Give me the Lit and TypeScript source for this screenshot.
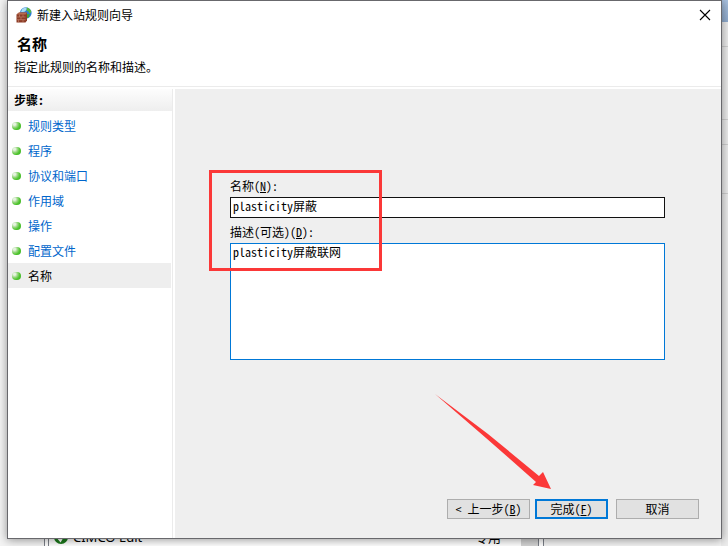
import { LitElement, html, css, svg } from "lit";
import { customElement, property, state } from "lit/decorators.js";
import { classMap } from "lit/directives/class-map.js";

@customElement("step-list")
class StepList extends LitElement {
  @property({ type: Array }) steps: string[] = [];
  @property({ type: Number }) current = 0;

  static styles = css`
    :host {
      display: block;
      background: #fff;
      border-right: 1px solid #ebebeb;
    }
    .heading {
      margin: 0;
      padding: 0 6px;
      height: 22px;
      line-height: 22px;
      font-size: 12px;
      font-weight: 900;
      background: linear-gradient(#fdfdfd, #eeeeee);
    }
    .list {
      margin: 2px 0 0;
      padding: 0;
      list-style: none;
    }
    .item {
      display: flex;
      align-items: center;
      gap: 7px;
      height: 25px;
      padding-left: 4px;
      margin-right: 1px;
    }
    .item.current {
      background: #eeeeee;
    }
    .bullet {
      flex: none;
      width: 9px;
      height: 8px;
      border-radius: 4px;
      background: radial-gradient(circle at 28% 28%, #e6f2e0 0 12%, #8fd476 38%, #4dc42c 62%, #3fae28);
    }
    .link {
      color: #0066cc;
      text-decoration: none;
    }
    .current .link {
      color: #000;
    }
  `;

  render() {
    return html`
      <h2 class="heading">步骤:</h2>
      <ul class="list">
        ${this.steps.map(
          (name, i) => html`
            <li class=${classMap({ item: true, current: i === this.current })}>
              <span class="bullet"></span>
              <a class="link" href="#step-${i}">${name}</a>
            </li>
          `
        )}
      </ul>
    `;
  }
}

@customElement("app-root")
class AppRoot extends LitElement {
  @state() private steps = ["规则类型", "程序", "协议和端口", "作用域", "操作", "配置文件", "名称"];

  static styles = css`
    :host {
      position: relative;
      min-height: 100vh;
      box-sizing: border-box;
      padding: 0 6px 7px 7px;
      overflow: hidden;
      display: flex;
      background: #eaeaea;
      color: #000;
      font: 12px/16px "Noto Sans Mono CJK SC", "Liberation Mono", "Noto Sans CJK SC", monospace;
    }
    .desktop {
      position: absolute;
      inset: 0;
      display: flex;
      align-items: flex-end;
      background: #f4f4f4;
    }
    .side {
      position: absolute;
      top: 0;
      right: 0;
      width: 7px;
      height: 100%;
      background: #ececec;
    }
    .strip {
      height: 22px;
      background: linear-gradient(#a9c1df, #8fabcd);
    }
    .rule {
      height: 24px;
      border-bottom: 1px solid #d0d0d0;
    }
    .rule.tall {
      height: 72px;
    }
    .rule.mid {
      height: 48px;
    }
    .behind {
      display: flex;
      align-items: center;
      box-sizing: border-box;
      height: 18px;
      width: 500px;
      margin-left: 44px;
      gap: 5px;
      border: solid #7b7f88;
      border-width: 0 1px;
      background: #fff;
      font-size: 13px;
      font-family: "Noto Sans", "Noto Sans CJK SC", sans-serif;
    }
    .behind .edge {
      height: 18px;
      margin-left: 3px;
      border-left: 1px solid #7b7f88;
    }
    .behind .name {
      flex: 1;
    }
    .behind .scroll {
      width: 17px;
      height: 18px;
      margin-left: 15px;
      margin-right: 4px;
      border-right: 1px solid #7b7f88;
      background: #d4d4d4;
    }
    .dialog {
      position: relative;
      flex: 1;
      min-width: 0;
      display: flex;
      flex-direction: column;
      border: 1px solid #68686c;
      background: #fff;
      box-shadow: 0 1px 9px rgba(0, 0, 0, 0.42);
    }
    .titlebar {
      display: flex;
      align-items: center;
      gap: 5px;
      height: 28px;
      padding: 0 8px;
      font-family: "Noto Sans CJK SC", sans-serif;
    }
    .title {
      flex: 1;
    }
    .close {
      display: flex;
      align-items: center;
      justify-content: center;
      width: 16px;
      height: 16px;
      padding: 0;
      border: 0;
      background: none;
    }
    .header {
      padding: 5px 6px 11px;
      border-bottom: 1px solid #ebebeb;
    }
    .heading {
      margin: 0 3px 5px;
      font-size: 15px;
      line-height: 20px;
      font-weight: 700;
    }
    .sub {
      margin: 0;
    }
    .body {
      flex: 1;
      display: grid;
      grid-template-columns: 165px minmax(0, 1fr);
      column-gap: 2px;
      margin-top: 2px;
    }
    .main {
      display: flex;
      flex-direction: column;
      justify-content: space-between;
      background: #efefef;
    }
    .form {
      position: relative;
      display: flex;
      flex-direction: column;
      margin: 89px 56px 0 55px;
    }
    .label {
      margin-bottom: 3px;
    }
    .field {
      box-sizing: border-box;
      width: 100%;
      border: 1px solid #111;
      border-radius: 0;
      background: #fff;
      color: #000;
      padding: 0 2px;
      font: inherit;
      outline: none;
      resize: none;
      display: block;
    }
    .name-field {
      height: 21px;
      margin-bottom: 6px;
      padding-bottom: 4px;
    }
    .desc-field {
      height: 117px;
      border-color: #0078d7;
    }
    .mark {
      position: absolute;
      left: -21px;
      top: -8px;
      box-sizing: border-box;
      width: 173px;
      height: 101px;
      border: 3px solid #fb3838;
      pointer-events: none;
    }
    .actions {
      position: relative;
      display: flex;
      justify-content: flex-end;
      gap: 8px;
      padding: 0 22px 19px 0;
    }
    .btn {
      box-sizing: border-box;
      width: 83px;
      height: 20px;
      padding: 0;
      border: 1px solid #adadad;
      background: #e1e1e1;
      color: #000;
      font: inherit;
      line-height: 16px;
    }
    .btn.default {
      width: 73px;
      margin-left: -3px;
      border: 2px solid #0078d7;
    }
    .arrow {
      position: absolute;
      right: 168px;
      bottom: 48px;
      width: 120px;
      height: 98px;
      pointer-events: none;
    }
  `;

  firstUpdated() {
    const desc = this.renderRoot.querySelector<HTMLTextAreaElement>("#desc");
    desc?.focus();
    desc?.setSelectionRange(desc.value.length, desc.value.length);
  }

  private shieldIcon() {
    return svg`
      <svg width="16" height="16" viewBox="0 0 16 16" aria-hidden="true">
        <circle cx="9.8" cy="6" r="5.8" fill="#2b7fd0"/>
        <path d="M6 2.200Q8 .3 10 .4L11 2 9 4.500 7 5 5 5Z" fill="#a8dcf4"/>
        <path d="M11 .6Q14.800 1.800 15.300 5L13.500 6.500 12.500 4.500 10.500 3.500Z" fill="#5ab83c"/>
        <path d="M11 7l3 .5-1.500 3-2 .8Z" fill="#42a531"/>
        <path d="M.5 7.500L3 5.500h8v8L9.500 15.500h-9Z" fill="#8d3c26"/>
        <path d="M.5 7.500L3 5.500h8L9.500 7.500Z" fill="#b56b50"/>
        <path d="M.5 10h9M.5 12.700h9M3.500 7.500V10M7 7.500V10M5 10v2.700M2.500 12.700v2.500M7 12.700v2.500" stroke="#c48a74" stroke-width=".6" fill="none"/>
      </svg>`;
  }

  render() {
    return html`
      <div class="desktop" aria-hidden="true">
        <div class="behind">
          <span class="edge"></span>
          <svg width="14" height="14" viewBox="0 0 12 12">
            <circle cx="6" cy="6" r="6" fill="#1c7a1c" />
            <path d="M3 6l2.500 3L9 3" stroke="#fff" stroke-width="2" fill="none" />
          </svg>
          <span class="name">CIMCO Edit</span>
          <span>专用</span>
          <span class="scroll"></span>
        </div>
        <div class="side">
          <div class="strip"></div>
          <div class="rule"></div>
          <div class="rule tall"></div>
          <div class="rule"></div>
          <div class="rule mid"></div>
        </div>
      </div>

      <section class="dialog" role="dialog" aria-labelledby="title">
        <div class="titlebar">
          ${this.shieldIcon()}
          <span class="title" id="title">新建入站规则向导</span>
          <button class="close" type="button" aria-label="关闭">
            <svg width="12" height="12" viewBox="0 0 12 12">
              <path d="M1 1L11 11M11 1L1 11" stroke="#000" stroke-width="1.1" />
            </svg>
          </button>
        </div>
        <header class="header">
          <h1 class="heading">名称</h1>
          <p class="sub">指定此规则的名称和描述。</p>
        </header>
        <div class="body">
          <step-list .steps=${this.steps} .current=${6}></step-list>
          <div class="main">
            <form class="form">
              <label class="label" for="name">名称(<u>N</u>):</label>
              <input class="field name-field" id="name" type="text" spellcheck="false" value="plasticity屏蔽" />
              <label class="label" for="desc">描述(可选)(<u>D</u>):</label>
              <textarea class="field desc-field" id="desc" spellcheck="false" .value=${"plasticity屏蔽联网"}></textarea>
              <div class="mark"></div>
            </form>
            <div class="actions">
              <button class="btn" type="button">&lt; 上一步(<u>B</u>)</button>
              <button class="btn default" type="button">完成(<u>F</u>)</button>
              <button class="btn" type="button">取消</button>
              <svg class="arrow" viewBox="0 0 120 98" aria-hidden="true">
                <path d="M2 2L55 42 106 84 110 80 118 97 100 93 103 90 53 46Z" fill="#fb3838" />
              </svg>
            </div>
          </div>
        </div>
      </section>
    `;
  }
}
